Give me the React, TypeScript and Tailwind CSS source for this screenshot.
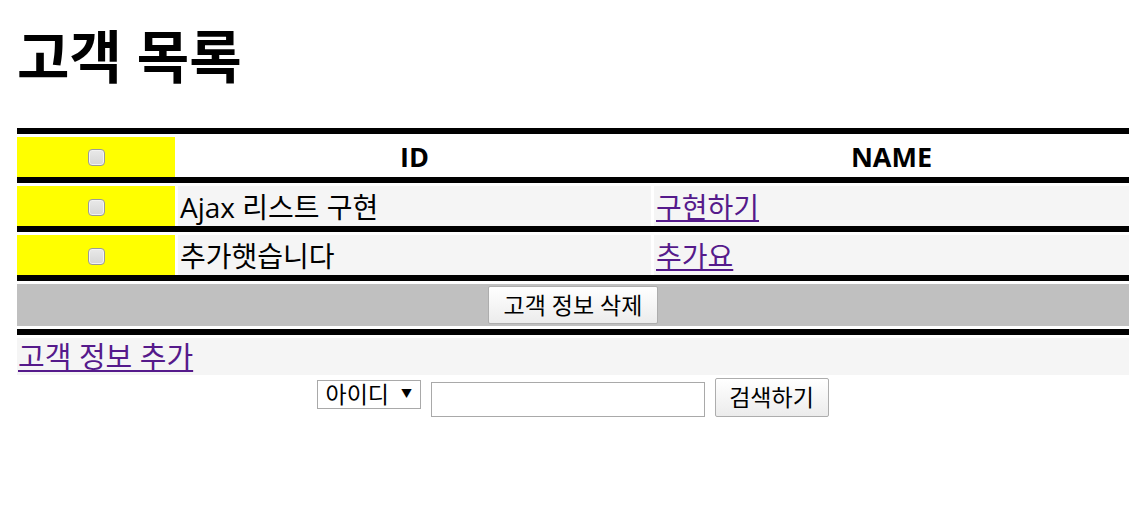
import React from "react";

const font = { fontFamily: '"Open Sans", "Noto Sans CJK KR", sans-serif' };

function Check() {
  return (
    <span className="inline-block h-[17px] w-[17px] shrink-0 rounded-[4px] border border-[#9a9a9a] bg-gradient-to-b from-[#e9e9e9] to-[#d6d6d6] shadow-[inset_0_0_0_1px_#f2f2f2]" />
  );
}

function Bar() {
  return <div className="h-[6px] w-full bg-black" />;
}

const rows = [
  { id: "Ajax 리스트 구현", name: "구현하기" },
  { id: "추가햇습니다", name: "추가요" },
];

export default function App() {
  return (
    <div className="min-h-[505px] bg-white text-black" style={font}>
      <div className="ml-[17px] w-[1112px]">
        <h1 className="pt-[21px] text-[57px] font-bold leading-[70px]">고객 목록</h1>

        <div className="mt-[37px] flex flex-col gap-[3px]">
          <Bar />
          <div className="grid h-[37px] grid-cols-[158px_473px_1fr] gap-[3px]">
            <div className="flex items-center justify-center bg-[#ffff00]">
              <Check />
            </div>
            <div className="flex items-center justify-center text-[27px] font-bold">ID</div>
            <div className="flex items-center justify-center text-[27px] font-bold">NAME</div>
          </div>
          {rows.map((r) => (
            <React.Fragment key={r.id}>
              <Bar />
              <div className="grid h-[37px] grid-cols-[158px_473px_1fr] gap-[3px]">
                <div className="flex items-center justify-center bg-[#ffff00]">
                  <Check />
                </div>
                <div className="flex items-center bg-[#f5f5f5] pl-[2px] text-[28px]">{r.id}</div>
                <div className="flex items-center bg-[#f5f5f5] pl-[2px] text-[28px]">
                  <a href="#" className="text-[#551a8b] underline">
                    {r.name}
                  </a>
                </div>
              </div>
            </React.Fragment>
          ))}
          <Bar />
          <div className="flex h-[42px] items-center justify-center bg-[#c0c0c0]">
            <button className="h-[38px] rounded-[2px] border border-[#adadad] bg-gradient-to-b from-white to-[#ececec] px-[15px] text-[23px] leading-none">
              고객 정보 삭제
            </button>
          </div>
          <Bar />
          <div className="flex h-[37px] items-center bg-[#f5f5f5] pl-[1px] text-[29px]">
            <a href="#" className="text-[#551a8b] underline">
              고객 정보 추가
            </a>
          </div>
        </div>

        <div className="flex items-start justify-center">
          <div className="ml-[-1px] mt-[5px] flex h-[29px] w-[104px] items-center border border-[#a9a9a9] bg-white pl-[8px] text-[23px]">
            <span className="leading-none">아이디</span>
            <span className="ml-[12px] text-[11px]">▼</span>
          </div>
          <input className="ml-[10px] mt-[7px] h-[35px] w-[274px] border border-[#a9a9a9] bg-white" />
          <button className="ml-[10px] mt-[3px] h-[39px] w-[114px] rounded-[2px] border border-[#adadad] bg-gradient-to-b from-white to-[#ececec] text-[23px] leading-none">
            검색하기
          </button>
        </div>
      </div>
    </div>
  );
}
